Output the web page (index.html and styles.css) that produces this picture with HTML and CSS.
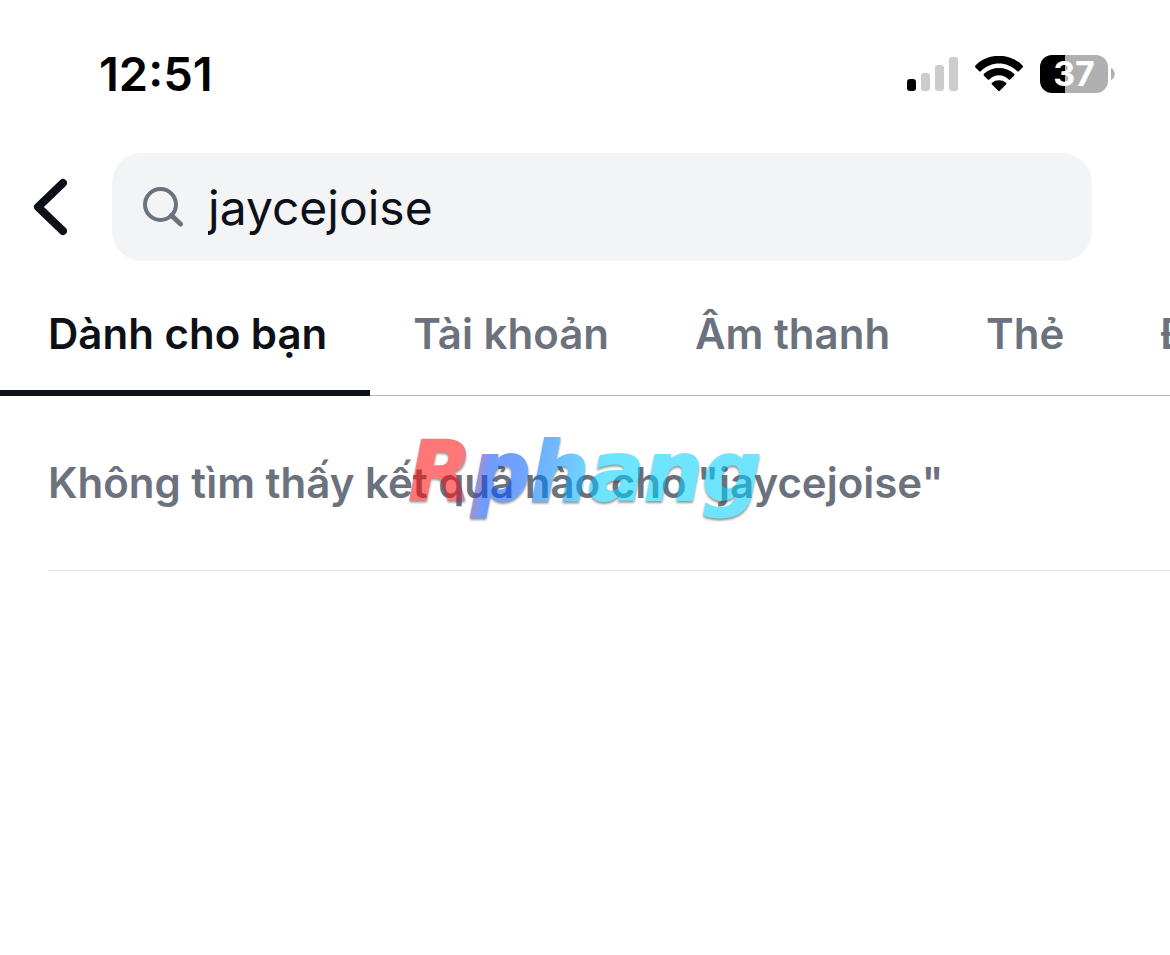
FILE: index.html
```
<!DOCTYPE html>
<html lang="vi">
<head>
    <meta charset="UTF-8">
    <meta name="viewport" content="width=device-width, initial-scale=1">
    <title>jaycejoise</title>
    <link rel="stylesheet" href="styles.css">
</head>
<body>
    <div class="status-bar">
        <span class="time">12:51</span>
        <div class="status-icons">
            <svg class="signal" width="52" height="36" viewBox="0 0 52 36">
                <rect x="1" y="23" width="9" height="12" rx="3" fill="#000"/>
                <rect x="15" y="17" width="9" height="18" rx="3" fill="#ccc"/>
                <rect x="29" y="9" width="9" height="26" rx="3" fill="#ccc"/>
                <rect x="43" y="1" width="9" height="34" rx="3" fill="#ccc"/>
            </svg>
            <svg class="wifi" width="50" height="36" viewBox="0 0 50 36">
                <path d="M1.500 11.500 Q.5 10.500 1.500 9.500 C14 -3.500 36 -3.500 48.500 9.500 Q49.500 10.500 48.500 11.500 L45 15 Q44 16 43 15 C33 5 17 5 7 15 Q6 16 5 15Z"/>
                <path d="M10 19.800 Q9 18.800 10 17.800 C18 10 32 10 40 17.800 Q41 18.800 40 19.800 L36.500 23.300 Q35.500 24.300 34.500 23.300 C29 18 21 18 15.500 23.300 Q14.500 24.300 13.500 23.300Z"/>
                <path d="M18 28.500 Q17 27.500 18 26.800 C22 23.500 28 23.500 32 26.800 Q33 27.500 32 28.500 L26 34.500 Q25 35.500 24 34.500Z"/>
            </svg>
            <div class="battery">
                <span class="battery-level">37</span>
                <svg class="battery-cap" width="4" height="12" viewBox="0 0 4 12"><path d="M0 0 C5 2 5 10 0 12Z" fill="#b0b0b0"/></svg>
            </div>
        </div>
    </div>

    <form class="search-bar">
        <button class="back" type="button" aria-label="Quay lại">
            <svg width="34" height="58" viewBox="0 0 34 58">
                <path d="M30 5 L5 29 L30 53" fill="none" stroke="#0d1117" stroke-width="8" stroke-linecap="round" stroke-linejoin="round"/>
            </svg>
        </button>
        <label class="search-box">
            <svg width="42" height="42" viewBox="0 0 42 42" fill="none" stroke="#6b737e" stroke-width="4">
                <circle cx="18.500" cy="18.500" r="15.500"/>
                <path d="M29.500 29.500 L38.500 38" stroke-linecap="round" stroke-width="5"/>
            </svg>
            <input type="text" value="jaycejoise" aria-label="Tìm kiếm" spellcheck="false">
        </label>
    </form>

    <nav class="tabs">
        <button class="tab active">Dành cho bạn</button>
        <button class="tab">Tài khoản</button>
        <button class="tab">Âm thanh</button>
        <button class="tab">Thẻ</button>
        <button class="tab">Đ</button>
    </nav>

    <main class="results">
        <p class="empty">Không tìm thấy kết quả nào cho "jaycejoise"</p>
        <div class="watermark">Rphang</div>
    </main>
</body>
</html>
```
FILE: styles.css
```
* {
    box-sizing: border-box;
}

body {
    margin: 0;
    background: #fff;
    color: #0d1117;
    font-family: Inter, "Liberation Sans", sans-serif;
}

button {
    padding: 0;
    border: none;
    background: none;
    font: inherit;
    cursor: pointer;
}

svg {
    display: block;
    flex: none;
}

/* status bar */
.status-bar {
    display: flex;
    justify-content: space-between;
    align-items: center;
    height: 148px;
    padding: 0 55px 0 99px;
    color: #000;
}

.time {
    font-size: 47px;
    font-weight: 600;
    line-height: 56px;
}

.status-icons {
    display: flex;
    align-items: center;
    gap: 16px;
}

.battery {
    display: flex;
    align-items: center;
    gap: 3px;
}

.battery-level {
    width: 68px;
    border-radius: 12px;
    background: linear-gradient(to right, #000 37%, #b0b0b0 37%);
    color: #fff;
    font-size: 34px;
    font-weight: 700;
    line-height: 38px;
    text-align: center;
}

/* search */
.search-bar {
    display: flex;
    align-items: center;
    gap: 45px;
    margin-top: 5px;
    padding: 0 78px 0 33px;
}

.search-box {
    display: flex;
    flex: 1;
    align-items: center;
    gap: 24px;
    height: 108px;
    padding: 0 30px;
    border-radius: 30px;
    background: #f3f4f6;
}

.search-box input {
    flex: 1;
    min-width: 0;
    padding: 0;
    border: none;
    outline: none;
    background: none;
    color: inherit;
    font-family: inherit;
    font-size: 48px;
}

/* tabs */
.tabs {
    display: flex;
    height: 135px;
    overflow: hidden;
    box-shadow: inset 0 -1px #b8babc;
}

.tab {
    flex: none;
    min-width: 184px;
    padding: 16px 43px 0;
    border-bottom: 6px solid transparent;
    color: #6b727e;
    font-size: 42px;
    font-weight: 600;
    white-space: nowrap;
}

.tab:last-child {
    min-width: 0;
}

.tab.active {
    padding-left: 48px;
    border-color: #0d1117;
    color: #0d1117;
}

/* results */
.results {
    position: relative;
}

.empty {
    margin: 0 0 0 48px;
    padding: 62px 0;
    border-bottom: 1px solid #e8e8e8;
    color: #6b727e;
    font-size: 42px;
    font-weight: 600;
    line-height: 50px;
}

.watermark {
    position: absolute;
    top: 28px;
    left: 50%;
    transform: translateX(-50%);
    background: linear-gradient(100deg, #ff1010 15%, #0454ff 24%, #0458ff 31%, #048cff 42%, #04d1ff 56%);
    -webkit-background-clip: text;
    background-clip: text;
    color: transparent;
    filter: drop-shadow(0 2px 1px #444);
    -webkit-text-stroke: 2px transparent;
    font-family: "DejaVu Sans", sans-serif;
    font-size: 82px;
    font-style: italic;
    font-weight: bold;
    line-height: 96px;
    opacity: 0.57;
    pointer-events: none;
}
```
